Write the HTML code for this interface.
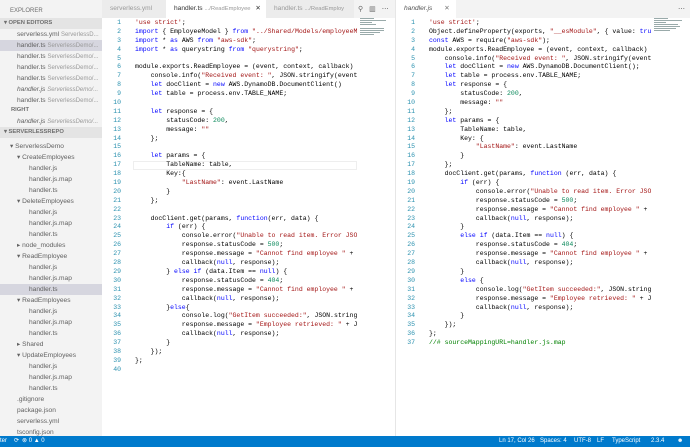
<!DOCTYPE html>
<html><head><meta charset="utf-8"><style>
*{margin:0;padding:0;box-sizing:border-box}
body{width:690px;height:447px;overflow:hidden;background:#fff;font-family:"Liberation Sans",sans-serif;position:relative}
.side{position:absolute;left:0;top:0;width:102px;height:436px;background:#f3f3f3;font-size:6.6px;color:#616161;overflow:hidden}
.side .r{position:absolute;height:11px;line-height:11px;white-space:nowrap;left:0;width:102px}
.side .d{color:#999;font-size:6px}
.hd{font-weight:bold;font-size:5.8px;color:#6f6f6f}
.tabs{position:absolute;top:0;height:18px;background:#f3f3f3}
.tab{position:absolute;top:0;height:18px;line-height:18px;font-size:6.6px;padding-left:8px;white-space:nowrap;overflow:hidden}
.code{position:absolute;top:19px;font-family:"Liberation Mono",monospace;font-size:6.5px;line-height:8.9px;overflow:hidden;color:#000}
.ln{position:absolute;top:19px;font-family:"Liberation Mono",monospace;font-size:6.5px;line-height:8.9px;color:#2b91af;text-align:right}
.code div,.ln div{height:8.9px;white-space:pre}
.k{color:#0000ff}.s{color:#a31515}.n{color:#09885a}.c{color:#008000}
.sb{position:absolute;left:0;top:436px;width:690px;height:11px;background:#007acc;color:#fff;font-size:6px;line-height:11px;white-space:nowrap}
.mm{position:absolute;top:18px}
.mm i{display:block;height:1.2px;margin-bottom:0.8px;background:#9aa}
</style></head><body>
<div class="side">
<div class="r" style="top:0;height:18px;line-height:22px;padding-left:10px;font-size:6px;color:#6f6f6f">EXPLORER</div>
<div class="r hd" style="top:18px;background:#e4e4e4;padding-left:4px">▾ OPEN EDITORS</div>
<div class="r" style="top:29px;padding-left:17px">serverless.yml <span class="d">ServerlessD...</span></div>
<div class="r" style="top:40px;padding-left:17px;background:#d6d6df">handler.ts <span class="d">ServerlessDemo/...</span></div>
<div class="r" style="top:51px;padding-left:17px">handler.ts <span class="d">ServerlessDemo/...</span></div>
<div class="r" style="top:62px;padding-left:17px">handler.ts <span class="d">ServerlessDemo/...</span></div>
<div class="r" style="top:73px;padding-left:17px">handler.ts <span class="d">ServerlessDemo/...</span></div>
<div class="r" style="top:84px;padding-left:17px;font-style:italic">handler.js <span class="d">ServerlessDemo/...</span></div>
<div class="r" style="top:95px;padding-left:17px">handler.ts <span class="d">ServerlessDemo/...</span></div>
<div class="r hd" style="top:105px;padding-left:11px">RIGHT</div>
<div class="r" style="top:116px;padding-left:17px;font-style:italic">handler.js <span class="d">ServerlessDemo/...</span></div>
<div class="r hd" style="top:127px;background:#e4e4e4;padding-left:4px">▾ SERVERLESSREPO</div>
<div class="r" style="top:141px;padding-left:10px">▾ ServerlessDemo</div>
<div class="r" style="top:152px;padding-left:17px">▾ CreateEmployees</div>
<div class="r" style="top:163px;padding-left:29px">handler.js</div>
<div class="r" style="top:174px;padding-left:29px">handler.js.map</div>
<div class="r" style="top:185px;padding-left:29px">handler.ts</div>
<div class="r" style="top:196px;padding-left:17px">▾ DeleteEmployees</div>
<div class="r" style="top:207px;padding-left:29px">handler.js</div>
<div class="r" style="top:218px;padding-left:29px">handler.js.map</div>
<div class="r" style="top:229px;padding-left:29px">handler.ts</div>
<div class="r" style="top:240px;padding-left:17px">▸ node_modules</div>
<div class="r" style="top:251px;padding-left:17px">▾ ReadEmployee</div>
<div class="r" style="top:262px;padding-left:29px">handler.js</div>
<div class="r" style="top:273px;padding-left:29px">handler.js.map</div>
<div class="r" style="top:284px;padding-left:29px;background:#d6d6df">handler.ts</div>
<div class="r" style="top:295px;padding-left:17px">▾ ReadEmployees</div>
<div class="r" style="top:306px;padding-left:29px">handler.js</div>
<div class="r" style="top:317px;padding-left:29px">handler.js.map</div>
<div class="r" style="top:328px;padding-left:29px">handler.ts</div>
<div class="r" style="top:339px;padding-left:17px">▸ Shared</div>
<div class="r" style="top:350px;padding-left:17px">▾ UpdateEmployees</div>
<div class="r" style="top:361px;padding-left:29px">handler.js</div>
<div class="r" style="top:372px;padding-left:29px">handler.js.map</div>
<div class="r" style="top:383px;padding-left:29px">handler.ts</div>
<div class="r" style="top:394px;padding-left:17px">.gitignore</div>
<div class="r" style="top:405px;padding-left:17px">package.json</div>
<div class="r" style="top:416px;padding-left:17px">serverless.yml</div>
<div class="r" style="top:427px;padding-left:17px">tsconfig.json</div>
</div>

<div class="tabs" style="left:102px;width:294px">
<div class="tab" style="left:0;width:64px;background:#ececec;color:#999">serverless.yml</div>
<div class="tab" style="left:64px;width:100px;background:#fff;color:#333">handler.ts <span style="color:#999;font-size:5.8px">.../ReadEmployee</span> <span style="margin-left:3px">✕</span></div>
<div class="tab" style="left:164px;width:88px;background:#ececec;color:#999">handler.ts <span style="font-size:5.8px">.../ReadEmploy</span></div>
<div style="position:absolute;left:256px;top:5px;font-size:7px;color:#666;letter-spacing:6px">⚲▥⋯</div>
</div>
<div style="position:absolute;left:395px;top:0;width:1px;height:436px;background:#e6e6e6"></div>
<div class="tabs" style="left:396px;width:294px">
<div class="tab" style="left:0;width:60px;background:#fff;color:#555;font-style:italic">handler.js <span style="font-style:normal;margin-left:10px;color:#777">✕</span></div>
<div style="position:absolute;left:282px;top:5px;font-size:7px;color:#666">⋯</div>
</div>

<div style="position:absolute;left:133px;top:161px;width:224px;height:9px;border:1px solid #eee"></div>
<div class="ln" style="left:104px;width:17px"><div>1</div><div>2</div><div>3</div><div>4</div><div>5</div><div>6</div><div>7</div><div>8</div><div>9</div><div>10</div><div>11</div><div>12</div><div>13</div><div>14</div><div>15</div><div>16</div><div>17</div><div>18</div><div>19</div><div>20</div><div>21</div><div>22</div><div>23</div><div>24</div><div>25</div><div>26</div><div>27</div><div>28</div><div>29</div><div>30</div><div>31</div><div>32</div><div>33</div><div>34</div><div>35</div><div>36</div><div>37</div><div>38</div><div>39</div><div>40</div></div>
<div class="code" style="left:135px;width:222px;height:417px"><div><span class="s">'use strict'</span>;</div><div><span class="k">import</span> { EmployeeModel } <span class="k">from</span> <span class="s">"../Shared/Models/employeeModel"</span>;</div><div><span class="k">import</span> * <span class="k">as</span> AWS <span class="k">from</span> <span class="s">"aws-sdk"</span>;</div><div><span class="k">import</span> * <span class="k">as</span> querystring <span class="k">from</span> <span class="s">"querystring"</span>;</div><div> </div><div>module.exports.ReadEmployee = (event, context, callback) <span class="k">=&gt;</span> {</div><div>    console.info(<span class="s">"Received event: "</span>, JSON.stringify(event, <span class="k">null</span>, 2));</div><div>    <span class="k">let</span> docClient = <span class="k">new</span> AWS.DynamoDB.DocumentClient()</div><div>    <span class="k">let</span> table = process.env.TABLE_NAME;</div><div> </div><div>    <span class="k">let</span> response = {</div><div>        statusCode: <span class="n">200</span>,</div><div>        message: <span class="s">""</span></div><div>    };</div><div> </div><div>    <span class="k">let</span> params = {</div><div>        TableName: table,</div><div>        Key:{</div><div>            <span class="s">"LastName"</span>: event.LastName</div><div>        }</div><div>    };</div><div> </div><div>    docClient.get(params, <span class="k">function</span>(err, data) {</div><div>        <span class="k">if</span> (err) {</div><div>            console.error(<span class="s">"Unable to read item. Error JSON:"</span>, JSON</div><div>            response.statusCode = <span class="n">500</span>;</div><div>            response.message = <span class="s">"Cannot find employee "</span> + event.LastName</div><div>            callback(<span class="k">null</span>, response);</div><div>        } <span class="k">else if</span> (data.Item == <span class="k">null</span>) {</div><div>            response.statusCode = <span class="n">404</span>;</div><div>            response.message = <span class="s">"Cannot find employee "</span> + event.LastName</div><div>            callback(<span class="k">null</span>, response);</div><div>        }<span class="k">else</span>{</div><div>            console.log(<span class="s">"GetItem succeeded:"</span>, JSON.stringify(data</div><div>            response.message = <span class="s">"Employee retrieved: "</span> + JSON.stringify</div><div>            callback(<span class="k">null</span>, response);</div><div>        }</div><div>    });</div><div>};</div><div> </div></div>
<div class="mm" style="left:360px;width:28px"><i style="width:14px"></i><i style="width:26px"></i><i style="width:12px"></i><i style="width:16px"></i><i style="width:0"></i><i style="width:24px"></i><i style="width:24px"></i><i style="width:20px"></i><i style="width:14px"></i></div>

<div class="ln" style="left:398px;width:17px"><div>1</div><div>2</div><div>3</div><div>4</div><div>5</div><div>6</div><div>7</div><div>8</div><div>9</div><div>10</div><div>11</div><div>12</div><div>13</div><div>14</div><div>15</div><div>16</div><div>17</div><div>18</div><div>19</div><div>20</div><div>21</div><div>22</div><div>23</div><div>24</div><div>25</div><div>26</div><div>27</div><div>28</div><div>29</div><div>30</div><div>31</div><div>32</div><div>33</div><div>34</div><div>35</div><div>36</div><div>37</div></div>
<div class="code" style="left:429px;width:222px;height:417px"><div><span class="s">'use strict'</span>;</div><div>Object.defineProperty(exports, <span class="s">"__esModule"</span>, { value: <span class="k">true</span> });</div><div><span class="k">const</span> AWS = require(<span class="s">"aws-sdk"</span>);</div><div>module.exports.ReadEmployee = (event, context, callback) <span class="k">=&gt;</span> {</div><div>    console.info(<span class="s">"Received event: "</span>, JSON.stringify(event, <span class="k">null</span>, 2));</div><div>    <span class="k">let</span> docClient = <span class="k">new</span> AWS.DynamoDB.DocumentClient();</div><div>    <span class="k">let</span> table = process.env.TABLE_NAME;</div><div>    <span class="k">let</span> response = {</div><div>        statusCode: <span class="n">200</span>,</div><div>        message: <span class="s">""</span></div><div>    };</div><div>    <span class="k">let</span> params = {</div><div>        TableName: table,</div><div>        Key: {</div><div>            <span class="s">"LastName"</span>: event.LastName</div><div>        }</div><div>    };</div><div>    docClient.get(params, <span class="k">function</span> (err, data) {</div><div>        <span class="k">if</span> (err) {</div><div>            console.error(<span class="s">"Unable to read item. Error JSON:"</span>, JSON</div><div>            response.statusCode = <span class="n">500</span>;</div><div>            response.message = <span class="s">"Cannot find employee "</span> + event.LastName</div><div>            callback(<span class="k">null</span>, response);</div><div>        }</div><div>        <span class="k">else if</span> (data.Item == <span class="k">null</span>) {</div><div>            response.statusCode = <span class="n">404</span>;</div><div>            response.message = <span class="s">"Cannot find employee "</span> + event.LastName</div><div>            callback(<span class="k">null</span>, response);</div><div>        }</div><div>        <span class="k">else</span> {</div><div>            console.log(<span class="s">"GetItem succeeded:"</span>, JSON.stringify(data</div><div>            response.message = <span class="s">"Employee retrieved: "</span> + JSON.stringify</div><div>            callback(<span class="k">null</span>, response);</div><div>        }</div><div>    });</div><div>};</div><div><span class="c">//# sourceMappingURL=handler.js.map</span></div></div>
<div class="mm" style="left:654px;width:32px"><i style="width:14px"></i><i style="width:28px"></i><i style="width:12px"></i><i style="width:24px"></i><i style="width:26px"></i><i style="width:22px"></i><i style="width:16px"></i></div>

<div class="sb"><span style="position:absolute;left:0">ter</span><span style="position:absolute;left:14px">⟳</span><span style="position:absolute;left:22px">⊗ 0 ▲ 0</span><span style="position:absolute;left:499px">Ln 17, Col 26</span><span style="position:absolute;left:540px">Spaces: 4</span><span style="position:absolute;left:574px">UTF-8</span><span style="position:absolute;left:597px">LF</span><span style="position:absolute;left:612px">TypeScript</span><span style="position:absolute;left:651px">2.3.4</span><span style="position:absolute;left:677px">☻</span></div>
</body></html>
